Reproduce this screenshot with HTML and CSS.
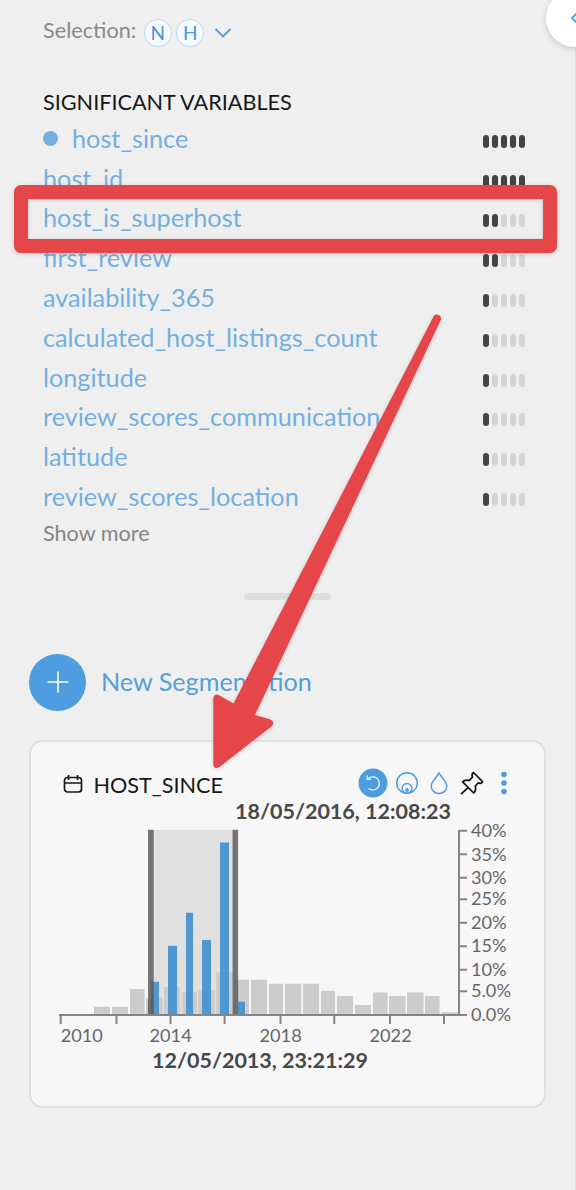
FILE: index.html
```html
<!DOCTYPE html>
<html lang="en">
<head>
<meta charset="utf-8">
<title>Segmentation</title>
<link rel="stylesheet" href="styles.css">
</head>
<body>
<aside class="panel">
  <div class="selection">
    <span class="selection-label">Selection:</span>
    <span class="chip">N</span>
    <span class="chip">H</span>
    <svg class="chevron" width="18" height="12" viewBox="0 0 18 12"><path d="M1.500 2 9 9.500 16.500 2"/></svg>
  </div>
  <h2 class="heading">SIGNIFICANT VARIABLES</h2>
  <ul class="variables">
    <li><span class="name"><i class="dot"></i>host_since</span><span class="meter"><b></b><b></b><b></b><b></b><b></b></span></li>
    <li><span class="name">host_id</span><span class="meter"><b></b><b></b><b></b><b></b><b></b></span></li>
    <li><span class="name">host_is_superhost</span><span class="meter"><b></b><b></b><i></i><i></i><i></i></span></li>
    <li><span class="name">first_review</span><span class="meter"><b></b><b></b><i></i><i></i><i></i></span></li>
    <li><span class="name">availability_365</span><span class="meter"><b></b><i></i><i></i><i></i><i></i></span></li>
    <li><span class="name">calculated_host_listings_count</span><span class="meter"><b></b><i></i><i></i><i></i><i></i></span></li>
    <li><span class="name">longitude</span><span class="meter"><b></b><i></i><i></i><i></i><i></i></span></li>
    <li><span class="name">review_scores_communication</span><span class="meter"><b></b><i></i><i></i><i></i><i></i></span></li>
    <li><span class="name">latitude</span><span class="meter"><b></b><i></i><i></i><i></i><i></i></span></li>
    <li><span class="name">review_scores_location</span><span class="meter"><b></b><i></i><i></i><i></i><i></i></span></li>
  </ul>
  <div class="more">Show more</div>
  <div class="grip"></div>
  <div class="new-segment">
    <span class="plus"><svg width="24" height="24" viewBox="0 0 24 24"><path d="M12 1.500v21M1.500 12h21"/></svg></span>
    <span class="new-label">New Segmentation</span>
  </div>
  <section class="card">
    <header class="card-head">
      <svg class="calendar" width="20" height="20" viewBox="0 0 20 20"><rect x="1.500" y="3.500" width="17" height="14.500" rx="3"/><path d="M1.500 9h17M5.500 1v5M14.500 1v5"/></svg>
      <span class="card-title">HOST_SINCE</span>
      <span class="tools">
        <svg width="30" height="30" viewBox="0 0 30 30"><circle cx="15" cy="15" r="14.500" fill="#4d9de0"/><path d="M9.600 11.200A6.600 6.600 0 1 1 10.500 20.400M9.200 7.600V11.300H13" fill="none" stroke="#e8f3fc" stroke-width="1.300"/></svg>
        <svg class="target" width="24" height="24" viewBox="0 0 24 24" fill="none" stroke="#4d9de0" stroke-width="1.500"><circle cx="12" cy="12" r="10.300"/><circle cx="12" cy="17.400" r="4.900"/><circle cx="12" cy="19" r="1.900" fill="#4d9de0" stroke="none"/></svg>
        <svg class="drop" width="20" height="24" viewBox="0 0 20 24" fill="none" stroke="#4d9de0" stroke-width="1.500"><path d="M10 2C8.500 5.200 2.200 10.500 2.200 15.200a7.800 7.300 0 0 0 15.600 0C17.800 10.500 11.500 5.200 10 2Z"/></svg>
        <svg class="pin" width="24" height="24" viewBox="0 0 24 24" fill="none" stroke="#111" stroke-width="1.700" stroke-linejoin="round"><path d="M13.500 1.500 22.600 10.600C21.500 12.600 19.700 12.500 18.300 11.800L15.200 15C16.200 18 15.500 20.200 13.700 22L2.600 10.900C4.300 9 6.500 8.600 9.300 9.400L12.500 6.200C11.700 4.700 11.800 3 13.500 1.500ZM8.300 16.300 1 23.200"/></svg>
        <svg class="dots" width="8" height="24" viewBox="0 0 8 24" fill="#4d9de0"><circle cx="4" cy="3.500" r="2.800"/><circle cx="4" cy="12" r="2.800"/><circle cx="4" cy="20.500" r="2.800"/></svg>
      </span>
    </header>
    <svg class="chart" width="480" height="275" viewBox="50 800 480 275">
      <rect x="151" y="830" width="84" height="184" fill="#e0e0e0"/>
      <path class="bars" d="M94 1014v-7.300h16v7.300ZM112 1014v-7.300h16v7.300ZM130 1014v-25h14.600v25ZM146 1014v-16h16.600v16ZM164 1014v-27h16v27ZM182.300 1014v-21.700h14.600v21.700ZM198 1014v-23.500h16.700v23.500ZM216.300 1014v-41.500h16.700v41.500ZM234.500 1014v-34.200h14.500v34.200ZM251 1014v-34.200h16v34.200ZM269 1014v-30.200h14v30.200ZM285 1014v-30.200h16.300v30.200ZM303 1014v-30.200h16v30.200ZM321 1014v-23.200h14v23.200ZM337 1014v-18h16v18ZM355 1014v-9h16v9ZM373 1014v-21.500h14.600v21.500ZM389 1014v-18h16.600v18ZM407 1014v-21.500h16.600v21.500ZM425 1014v-18h14.600v18ZM441.700 1014v-1.700h16.300v1.700Z"/>
      <path class="bars-on" d="M151 1014v-32.200h8v32.200ZM168 1014v-68.300h9v68.300ZM186 1014v-101.200h7v101.200ZM202 1014v-74h9v74ZM220 1014v-171.600h9v171.600ZM238 1014v-12.200h7v12.200Z"/>
      <path class="handles" d="M148 829.700h5.700v184.300h-5.700ZM232.600 829.700h5.500v184.300h-5.500Z"/>
      <path class="axis" d="M59 1015h408M459 830v185M459 830.700h8M459 854.300h8M459 877.700h8M459 899.300h8M459 922.700h8M459 946.300h8M459 969.700h8M459 991.300h8M60.700 1015v9M116.500 1015v9M170.500 1015v9M224.600 1015v9M280.500 1015v9M334.300 1015v9M390 1015v9M444 1015v9"/>
      <g class="tick">
        <text x="471" y="836.500">40%</text><text x="471" y="860.500">35%</text><text x="471" y="883.500">30%</text><text x="471" y="904.500">25%</text><text x="471" y="928.700">20%</text><text x="471" y="951.800">15%</text><text x="471" y="976">10%</text><text x="471" y="997">5.0%</text><text x="471" y="1021.200">0.0%</text>
        <text x="60.700" y="1042">2010</text><text x="149.500" y="1042">2014</text><text x="259.500" y="1042">2018</text><text x="369.500" y="1042">2022</text>
      </g>
      <text class="date" x="235" y="819">18/05/2016, 12:08:23</text>
      <text class="date" x="152" y="1068">12/05/2013, 23:21:29</text>
    </svg>
  </section>
</aside>
<button class="collapse"><svg width="14" height="14" viewBox="0 0 14 14"><path d="M8 1 2 7l6 6"/></svg></button>
<div class="highlight"></div>
<svg class="arrow" width="240" height="470" viewBox="205 305 240 470"><path d="M433.800 316A4.200 4.200 0 0 1 441 319.500L255 715 270.500 719.500Q275.500 722 271.500 726.500L219.500 767Q214 770 213.300 764.500V698Q214.500 692.500 219.500 695.500L233.500 703.500Z"/></svg>
</body>
</html>
```
FILE: styles.css
```css
* { box-sizing: border-box; }
body {
  margin: 0;
  width: 576px;
  height: 1190px;
  position: relative;
  overflow: hidden;
  background: #efefef;
  font-family: Lato, "Liberation Sans", sans-serif;
}
.panel {
  height: 1190px;
  padding: 16px 29px 0 29px;
  border-right: 1px solid #dcdcdc;
}
.selection { display: flex; align-items: center; height: 33px; padding-left: 14px; }
.selection-label { font-size: 21.700px; line-height: 28px; color: #8a8a8a; margin: -5px 7.500px 0 0; }
.chip {
  width: 28px;
  height: 28px;
  margin-right: 4.500px;
  border: 1.500px solid #b3dbf3;
  border-radius: 50%;
  background: #f7fafc;
  color: #4a94dc;
  font-size: 19px;
  line-height: 25px;
  text-align: center;
}
.chevron { margin-left: 5px; fill: none; stroke: #4d9de0; stroke-width: 1.800; }
.heading { margin: 39px 0 0 14px; height: 28px; font-size: 21.650px; line-height: 28px; font-weight: 400; color: #161616; white-space: nowrap; }
.variables { list-style: none; margin: 5.500px 21px 0 14px; padding: 0; }
.variables li { display: flex; justify-content: space-between; align-items: center; height: 39.800px; }
.name { display: flex; align-items: center; font-size: 25.250px; line-height: 30px; color: #74afe1; margin-top: -7px; white-space: nowrap; }
.dot { width: 15px; height: 15px; border-radius: 50%; background: #74afe1; margin: 2px 14px 0 0; }
.meter { display: flex; gap: 3px; }
.meter b, .meter i { width: 6px; height: 13px; border-radius: 3px; background: #d4d4d4; }
.meter b { background: #444; }
.more { margin: 0 0 0 14px; height: 28px; font-size: 21.600px; line-height: 28px; color: #858585; }
.grip { width: 87px; height: 7px; margin: 45.500px auto 0 215px; border-radius: 4px; background: #dedede; }
.new-segment { display: flex; align-items: center; gap: 15px; height: 57px; margin-top: 54px; font-size: 25.200px; color: #549fdc; white-space: nowrap; }
.new-label { margin-top: -3px; }
.plus { display: flex; align-items: center; justify-content: center; width: 57px; height: 57px; border-radius: 50%; background: #4d9de0; }
.plus svg { stroke: #fff; stroke-width: 1.600; }
.card { height: 368px; margin-top: 29px; padding: 27px 0 0 19px; border: 2px solid #e0e0e0; border-radius: 14px; background: #f7f7f7; }
.card-head { display: flex; align-items: center; height: 30px; padding: 0 36px 0 12.500px; }
.calendar { fill: none; stroke: #181818; stroke-width: 1.700; }
.card-title { margin: 2px 0 0 11px; font-size: 21.650px; line-height: 28px; color: #181818; }
.tools { display: flex; align-items: center; margin: -1px 0 0 auto; }
.target { margin-left: 7px; }
.drop { margin-left: 10px; }
.pin { margin-left: 10.500px; }
.dots { margin-left: 16.500px; }
.chart { display: block; margin-top: 1px; overflow: visible; }
.bars { fill: #ccc; }
.bars-on { fill: #4f97d0; }
.handles { fill: #555; fill-opacity: .8; }
.axis { fill: none; stroke: #858585; stroke-width: 2; }
.tick { font-size: 18.200px; fill: #666; }
.date { font-size: 21.500px; font-weight: 700; fill: #484848; }
.collapse { position: absolute; left: 546px; top: -11px; width: 58px; height: 58px; padding: 0 0 0 24px; border: 0; border-radius: 50%; background: #fff; box-shadow: 0 2px 6px rgba(0,0,0,.16); text-align: left; }
.collapse svg { display: block; fill: none; stroke: #4d9de0; stroke-width: 1.800; }
.highlight { position: absolute; left: 14px; top: 185px; width: 543px; height: 68px; border: 14px solid #e5464a; border-radius: 7px; filter: drop-shadow(0 1px 2px rgba(0,0,0,.16)); }
.arrow { position: absolute; left: 205px; top: 305px; fill: #e5464a; overflow: visible; filter: drop-shadow(0 1px 2px rgba(0,0,0,.16)); }
```
